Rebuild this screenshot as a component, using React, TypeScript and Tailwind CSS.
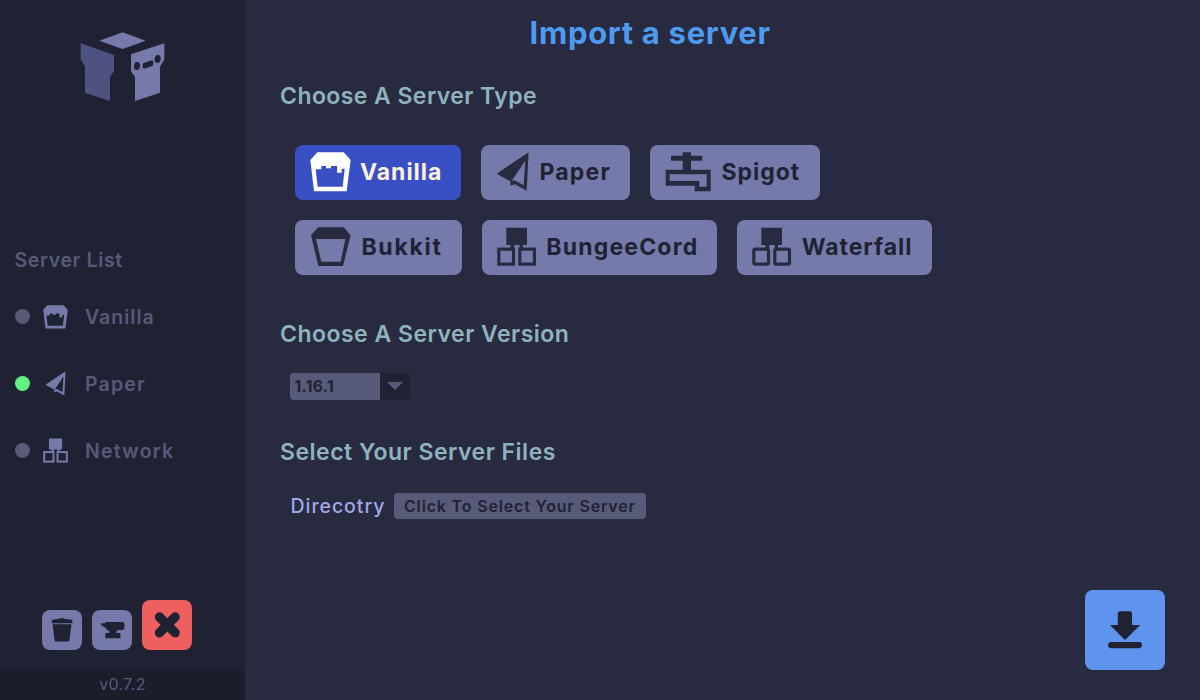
import type { ReactNode } from 'react';

type IconProps = { className: string };

function Logo() {
  return (
    <svg viewBox="60 36 255 210" className="h-[70px] w-[85px]">
      <path fill="#757aab" d="M188 37 257 62 188 87 118 62Z" />
      <path fill="#4d5280" d="M62 70 162 105V154L150 170V243L75 218V140L62 118Z" />
      <path fill="#757aab" d="M313 70 213 103V154L225 170V243L300 218V140L313 118Z" />
      <ellipse cx="231" cy="138" rx="9" ry="12" fill="#202234" transform="rotate(10 231 138)" />
      <ellipse cx="293" cy="117" rx="9" ry="12" fill="#202234" transform="rotate(10 293 117)" />
      <path
        d="M253 134 275 126V133L253 141Z"
        fill="#202234"
        stroke="#202234"
        strokeWidth="10"
        strokeLinejoin="round"
      />
    </svg>
  );
}

function VanillaIcon({ className }: IconProps) {
  return (
    <svg viewBox="75 52 123 120" preserveAspectRatio="none" fill="currentColor" className={className}>
      <path
        fillRule="evenodd"
        d="M97 53H176L197 76 185 170H87L76 76ZM92 104 98 156H173L179 102H170V114H156V94H138V101H123V94H109V104Z"
      />
    </svg>
  );
}

function BukkitIcon({ className }: IconProps) {
  return (
    <svg viewBox="75 276 123 120" fill="currentColor" className={className}>
      <path fillRule="evenodd" d="M99 277H176L197 301 174 393H100L78 301ZM93 312 109 380H167L181 312Z" />
    </svg>
  );
}

function PaperIcon({ className }: IconProps) {
  return (
    <svg viewBox="64 52 100 118" fill="currentColor" className={className}>
      <path
        fillRule="evenodd"
        d="M66 117 162 53 156 168 121 149 108 153 107 140ZM152 78 111 138 120 137 147 152Z"
      />
    </svg>
  );
}

function SpigotIcon({ className }: IconProps) {
  return (
    <svg viewBox="76 52 138 120" fill="currentColor" className={className}>
      <path d="M129 53H154V63H188V78H154V106H129V78H94V63H129Z" />
      <path
        fillRule="evenodd"
        d="M78 105H213V170H165V153H78ZM90 119V139H179V156H201V119Z"
      />
    </svg>
  );
}

function NetworkIcon({ className, rounded = false }: IconProps & { rounded?: boolean }) {
  const r = rounded ? 4 : 0;
  return (
    <svg viewBox="65 277 118 118" fill="currentColor" className={className}>
      <path d="M93 279H155V331H143V341H133V331H117V341H105V331H93Z" />
      <g fill="none" stroke="currentColor" strokeWidth="9.5">
        <rect x="70.5" y="343.5" width="44" height="45" rx={r} />
        <rect x="133.5" y="343.5" width="44" height="45" rx={r} />
      </g>
    </svg>
  );
}

function TypeButton({ className, children }: { className: string; children: ReactNode }) {
  return (
    <button
      className={`flex h-[55px] items-center rounded-lg pl-[15px] text-[23px] leading-8 font-bold whitespace-nowrap ${className}`}
    >
      {children}
    </button>
  );
}

function ServerRow({ dot, icon, children }: { dot: string; icon: ReactNode; children: ReactNode }) {
  return (
    <li className="flex h-[67px] items-center pl-[15px]">
      <span className={`size-[15px] rounded-full ${dot}`} />
      <span className="flex w-[50px] justify-center text-[#757aab]">{icon}</span>
      <span className="pl-[5px] text-[19.5px] leading-6 font-semibold">{children}</span>
    </li>
  );
}

function Sidebar() {
  return (
    <aside className="flex w-[245px] shrink-0 flex-col bg-[#202234] text-[#575a78]">
      <div className="flex h-[248px] justify-center pt-8">
        <Logo />
      </div>
      <h2 className="pl-[14.5px] text-[19.5px] leading-6 font-semibold tracking-[0.65px]">Server List</h2>
      <ul className="mt-[11px]">
        <ServerRow dot="bg-[#575a78]" icon={<VanillaIcon className="h-6 w-[25px]" />}>
          <span className="tracking-[1px]">Vanilla</span>
        </ServerRow>
        <ServerRow dot="bg-[#5ff281]" icon={<PaperIcon className="h-[25px] w-[21px]" />}>
          <span className="tracking-[1.2px]">Paper</span>
        </ServerRow>
        <ServerRow dot="bg-[#575a78]" icon={<NetworkIcon className="size-[25px]" />}>
          <span className="tracking-[1.25px]">Network</span>
        </ServerRow>
      </ul>
      <div className="mt-auto mb-5 flex items-end gap-2.5 pl-[42.4px] text-[#202234]">
        <button className="flex size-10 items-center justify-center rounded-lg bg-[#757aab]">
          <svg viewBox="0 0 40 40" fill="currentColor" className="size-10">
            <path d="M9.8 13.3V11.3Q9.8 9.8 11.5 9.5L17 9V8.2H22.5V9L28 9.5Q30.4 9.8 30.4 11.3V13.3ZM10.6 14.3H29.4L27.5 30.2Q27.3 31.6 26 31.6H14Q12.8 31.6 12.6 30.2Z" />
          </svg>
        </button>
        <button className="flex size-10 items-center justify-center rounded-lg bg-[#757aab]">
          <svg viewBox="0 0 40 40" fill="currentColor" className="size-10">
            <path d="M8.6 13.3H13.5V12H31L32.4 13.3V18.5L31 20H26L24.5 21V23H28.4V28.2H13.4V23H17.3V21L14.5 19.5L13.5 17.5L9.5 15.5Z" />
          </svg>
        </button>
        <button className="flex size-[50px] items-center justify-center rounded-lg bg-[#ee5f5f]">
          <svg viewBox="0 0 50 50" className="size-[50px]">
            <path d="M17.5 17 33.1 32.8M33.1 17 17.5 32.8" stroke="currentColor" strokeWidth="9.4" strokeLinecap="round" />
          </svg>
        </button>
      </div>
      <footer className="h-[30px] bg-[#1c1d2b] text-center text-[16px] leading-[29px] tracking-[0.35px]">
        v0.7.2
      </footer>
    </aside>
  );
}

function ImportForm() {
  return (
    <main className="flex flex-1 flex-col bg-[#282a40] pt-[17px] pl-[35px]">
      <h1 className="pl-[249.5px] text-[31px] leading-8 font-bold tracking-[0.7px] text-[#4d9af0]">
        Import a server
      </h1>

      <h2 className="mt-[31px] text-[23px] leading-8 font-semibold tracking-[0.43px] text-[#8fb3bd]">
        Choose A Server Type
      </h2>
      <div className="mt-[32.5px] flex flex-col gap-5 pl-[15px] text-[#202234]">
        <div className="flex gap-5">
          <TypeButton className="w-[166.4px] gap-[9px] bg-[#3850c4] tracking-[0.97px] text-[#fff0d9]">
            <VanillaIcon className="h-10 w-[41px] shrink-0 text-white" />
            Vanilla
          </TypeButton>
          <TypeButton className="w-[149px] gap-[9.8px] bg-[#757aab] tracking-[1.2px]">
            <PaperIcon className="h-[39.3px] w-[33.3px] shrink-0 text-[#282a40]" />
            Paper
          </TypeButton>
          <TypeButton className="w-[169.5px] gap-2.5 bg-[#757aab] tracking-[1px]">
            <SpigotIcon className="h-10 w-[46px] shrink-0 text-[#282a40]" />
            Spigot
          </TypeButton>
        </div>
        <div className="flex gap-5">
          <TypeButton className="w-[167px] gap-[10.4px] bg-[#757aab] tracking-[1.75px]">
            <BukkitIcon className="h-10 w-[41px] shrink-0 text-[#282a40]" />
            Bukkit
          </TypeButton>
          <TypeButton className="w-[235.4px] gap-2.5 bg-[#757aab] tracking-[1.18px]">
            <NetworkIcon className="size-[39.3px] shrink-0 text-[#282a40]" />
            BungeeCord
          </TypeButton>
          <TypeButton className="w-[194.6px] gap-2.5 bg-[#757aab] tracking-[0.95px]">
            <NetworkIcon rounded className="size-[39.3px] shrink-0 text-[#282a40]" />
            Waterfall
          </TypeButton>
        </div>
      </div>

      <h2 className="mt-[43.5px] text-[23px] leading-8 font-semibold tracking-[0.49px] text-[#8fb3bd]">
        Choose A Server Version
      </h2>
      <button className="mt-[23px] ml-2.5 flex h-[27px] w-[120px] overflow-hidden rounded text-[#202234]">
        <span className="h-full w-[90px] bg-[#575a78] pl-[4.5px] text-left text-[15.5px] leading-[27px] font-bold tracking-[0.4px]">
          1.16.1
        </span>
        <span className="flex h-full w-[30px] items-center justify-center bg-[#202234]">
          <svg viewBox="0 0 16 8" className="-mt-0.5 h-2 w-4">
            <path d="M0 0H16L8 8Z" fill="#575a78" />
          </svg>
        </span>
      </button>

      <h2 className="mt-9 text-[23px] leading-8 font-semibold tracking-[0.49px] text-[#8fb3bd]">
        Select Your Server Files
      </h2>
      <div className="mt-[24.5px] flex h-[26.5px] items-center pl-[10.5px]">
        <span className="w-[103.5px] text-[19.5px] leading-6 font-medium tracking-[0.95px] text-[#9fa8e8]">Direcotry</span>
        <button className="h-full w-[252px] rounded bg-[#575a78] pl-[10px] text-left text-[16px] leading-[26.5px] font-semibold tracking-[0.83px] whitespace-nowrap text-[#202234]">
          Click To Select Your Server
        </button>
      </div>

      <button className="mt-auto mr-[35px] mb-[30px] flex size-20 items-center justify-center self-end rounded-lg bg-[#5e94ee] text-[#202234]">
        <svg viewBox="0 0 80 80" fill="currentColor" className="size-20">
          <path d="M35 21.3H45Q47 21.3 47 23.5V35H55.2L40 50 25 35H32.8V23.5Q32.8 21.3 35 21.3Z" />
          <rect x="23" y="52" width="34" height="6.2" rx="3.1" />
        </svg>
      </button>
    </main>
  );
}

export default function App() {
  return (
    <div className="flex h-[700px] w-[1200px] overflow-hidden font-['Inter',sans-serif]">
      <Sidebar />
      <ImportForm />
    </div>
  );
}
